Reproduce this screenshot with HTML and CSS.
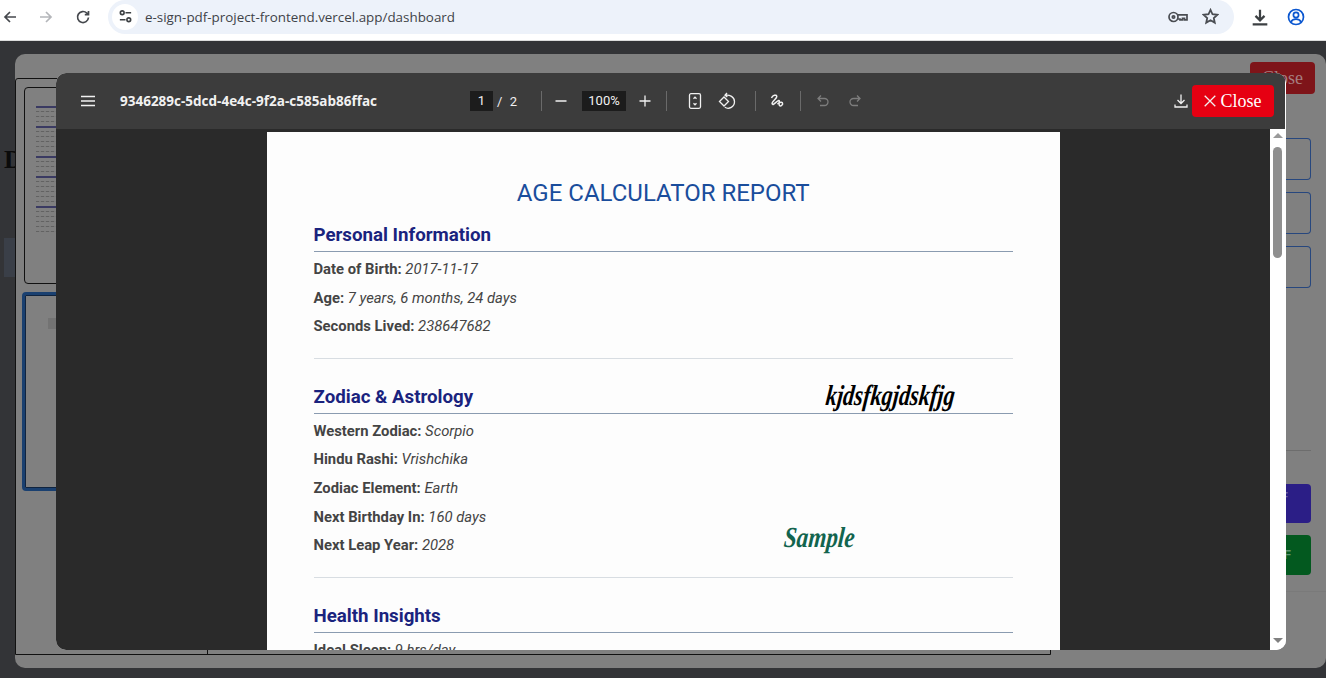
FILE: index.html
```html
<!DOCTYPE html>
<html lang="en">
<head>
  <meta charset="UTF-8">
  <title>Dashboard</title>
  <link rel="stylesheet" href="styles.css">
</head>
<body>

  <header class="browser-bar">
    <svg class="nav-icon" viewBox="0 0 16 16"><path d="M14 8H3M8 3 3 8l5 5"/></svg>
    <svg class="nav-icon nav-off" viewBox="0 0 16 16"><path d="M2 8h11M8 3l5 5-5 5"/></svg>
    <svg class="nav-icon" viewBox="0 0 16 16"><path d="M13.500 8.500A5.500 5.500 0 1 1 11.800 4L13.500 5.700M13.500 2v3.700H9.800"/></svg>
    <div class="url-box">
      <span class="site-chip">
        <svg viewBox="0 0 16 16"><circle cx="4.500" cy="4" r="2"/><path d="M8 4h6M2 11.500h6"/><circle cx="11.500" cy="11.500" r="2"/></svg>
      </span>
      <span class="url-text">e-sign-pdf-project-frontend.vercel.app/dashboard</span>
      <svg class="url-icon url-key" viewBox="0 0 20 12"><circle cx="5.500" cy="6" r="4.500"/><circle cx="5.500" cy="6" r="1.200"/><path d="M10 3.800h9v5h-2.500V7.300h-2v1.500h-2.500V8H10"/></svg>
      <svg class="url-icon" viewBox="0 0 16 16"><path d="m8 1.800 1.900 4.100 4.500.5-3.300 3 .9 4.400L8 11.600l-4 2.200.9-4.400-3.300-3 4.500-.5z"/></svg>
    </div>
    <svg class="bar-download" viewBox="0 0 16 16"><path d="M8 1.500v9M4 7l4 4 4-4M1.500 14.500h13"/></svg>
    <svg class="bar-profile" viewBox="0 0 18 18"><circle cx="9" cy="9" r="7.500"/><circle cx="9" cy="7" r="2.600"/><path d="M3.800 14c1.500-2.200 3.200-2.800 5.200-2.800s3.700.6 5.200 2.800"/></svg>
  </header>

  <main class="page-dim">
    <span class="back-letter">D</span>
    <span class="back-tab"></span>

    <div class="back-modal">
      <div class="back-head">
        <span class="back-close">Close</span>
      </div>
      <div class="back-body">
        <div class="doc-box">
          <aside class="thumb-col">
            <div class="thumb thumb-text">
              <b></b><i></i><i></i><i></i>
              <b></b><i></i><i></i><i></i><i></i><i></i>
              <b></b><i></i><i></i><i></i>
              <b></b><i></i><i></i><i></i><i></i><i></i>
              <b></b><i></i><i></i><i></i><i></i><i></i>
            </div>
            <div class="thumb thumb-active"><span class="mini-sign"></span></div>
          </aside>
        </div>
        <section class="tool-col">
          <div class="tool-box"></div>
          <div class="tool-box"></div>
          <div class="tool-box"></div>
          <div class="tool-rule"></div>
          <div class="tool-btn tool-blue">PDF</div>
          <div class="tool-btn tool-green">PDF</div>
          <div class="tool-foot"></div>
        </section>
      </div>
    </div>

    <div class="pdf-modal">
      <div class="pdf-toolbar">
        <svg class="tb-menu" viewBox="0 0 16 12"><path d="M1 1.500h14M1 6h14M1 10.500h14"/></svg>
        <span class="pdf-name">9346289c-5dcd-4e4c-9f2a-c585ab86ffac</span>
        <div class="tb-center">
          <span class="tb-input tb-page">1</span>
          <span class="tb-count"><span>/</span><span>2</span></span>
          <span class="tb-sep sep-a"></span>
          <svg class="tb-icon" viewBox="0 0 16 16"><path d="M2.500 8h11"/></svg>
          <span class="tb-input tb-zoom">100%</span>
          <svg class="tb-icon" viewBox="0 0 16 16"><path d="M2.500 8h11M8 2.500v11"/></svg>
          <span class="tb-sep sep-b"></span>
          <svg class="tb-icon" viewBox="0 0 16 16"><rect x="2.500" y=".7" width="11" height="14.600" rx="1.500"/><path d="M6.500 5.700 8 4.200l1.500 1.500M6.500 10.300 8 11.800l1.500-1.500"/></svg>
          <svg class="tb-icon tb-rotate" viewBox="0 0 18 18"><path d="M1.500 9.500 6 5l4.500 4.500L6 14zM9 1 7 3.200l2.300 1.900M7.200 3.200c4.500-.6 9.300 1.600 9.300 6.600a6.400 6.400 0 0 1-9.700 5.500"/></svg>
          <span class="tb-sep sep-c"></span>
          <svg class="tb-icon tb-sign" viewBox="0 0 16 16"><path d="M2.500 5C3.500 2.300 7.500 1 7.800 3.500 8 6 2 8.500 3.200 11c1 2 4.300-3 6.500-3.500 1.600-.3-.4 3.500.7 5 1.400 1.300 4-1.200 3-2.700-1-1.200-4.300 0-4.900 1.500"/></svg>
          <span class="tb-sep sep-d"></span>
          <svg class="tb-icon tb-off" viewBox="0 0 16 16"><path d="M6 2.500 3 5.500l3 3M3 5.500h6.500a3.500 3.500 0 0 1 0 7H5"/></svg>
          <svg class="tb-icon tb-off tb-redo" viewBox="0 0 16 16"><path d="m10 2.500 3 3-3 3M13 5.500H6.500a3.500 3.500 0 0 0 0 7H11"/></svg>
        </div>
        <svg class="tb-icon tb-download" viewBox="0 0 16 16"><path d="M8 1.500V10M4.500 7 8 10.500 11.500 7M2 11.500v2.500h12v-2.500"/></svg>
        <button class="close-btn" type="button">
          <svg viewBox="0 0 12 12"><path d="M.7.700l10.600 10.600M11.300.700.7 11.300"/></svg>
          Close
        </button>
      </div>

      <div class="pdf-view">
        <div class="pdf-pages">
          <article class="pdf-page">
            <h1>AGE CALCULATOR REPORT</h1>

            <h2>Personal Information</h2>
            <p><b>Date of Birth:</b> <em>2017-11-17</em></p>
            <p><b>Age:</b> <em>7 years, 6 months, 24 days</em></p>
            <p><b>Seconds Lived:</b> <em>238647682</em></p>
            <hr>

            <h2>Zodiac &amp; Astrology</h2>
            <p><b>Western Zodiac:</b> <em>Scorpio</em></p>
            <p><b>Hindu Rashi:</b> <em>Vrishchika</em></p>
            <p><b>Zodiac Element:</b> <em>Earth</em></p>
            <p><b>Next Birthday In:</b> <em>160 days</em></p>
            <p><b>Next Leap Year:</b> <em>2028</em></p>
            <hr>

            <h2>Health Insights</h2>
            <p><b>Ideal Sleep:</b> <em>9 hrs/day</em></p>

            <span class="sign sign-black">kjdsfkgjdskfjg</span>
            <span class="sign sign-green">Sample</span>
          </article>
        </div>
        <div class="scrollbar">
          <span class="arrow-up"></span>
          <span class="scroll-thumb"></span>
          <span class="arrow-down"></span>
        </div>
      </div>
    </div>
  </main>

</body>
</html>
```

FILE: styles.css
```css
* {
  box-sizing: border-box;
}
html, body {
  height: 100%;
}
body {
  margin: 0;
  overflow: hidden;
  font-family: 'Roboto', 'Liberation Sans', sans-serif;
  background-color: #fff;
}

/* browser bar */
.browser-bar {
  height: 41px;
  display: flex;
  align-items: center;
  padding: 0 0 7px 2px;
  background-color: #fff;
  border-bottom: 1px solid #dcdcdc;
}
.browser-bar svg {
  fill: none;
  stroke-width: 1.700;
}
.nav-icon {
  width: 16px;
  height: 16px;
  margin-right: 20px;
  stroke: #45484d;
}
.nav-off {
  stroke: #b4b6ba;
  margin-right: 21px;
}
.url-box {
  width: 1126px;
  height: 34px;
  margin-left: -3px;
  display: flex;
  align-items: center;
  padding: 0 15px 0 4px;
  background-color: #edf2fa;
  border-radius: 17px;
}
.site-chip {
  width: 26px;
  height: 26px;
  display: flex;
  align-items: center;
  justify-content: center;
  background-color: #fff;
  border-radius: 50%;
}
.site-chip svg {
  width: 15px;
  height: 15px;
  stroke: #3c4043;
}
.url-text {
  flex: 1;
  margin-left: 7px;
  font-size: 13.400px;
  color: #3f4348;
  font-family: 'Open Sans', 'Liberation Sans', sans-serif;
}
.url-icon {
  width: 17px;
  height: 17px;
  stroke: #4a4d52;
}
.url-key {
  width: 20px;
  height: 12px;
  margin-right: 14px;
  margin-left: -1px;
}
.bar-download {
  width: 18px;
  height: 18px;
  margin-left: 17px;
  stroke: #3c4043;
  stroke-width: 2 !important;
}
.bar-profile {
  width: 18px;
  height: 18px;
  margin-left: 18px;
  stroke: #0b57d0;
}

/* dimmed page behind the viewer */
.page-dim {
  position: relative;
  height: 637px;
  padding: 13px 0 10px 15px;
  background-color: #333437;
}
.back-modal {
  position: relative;
  height: 100%;
  display: flex;
  flex-direction: column;
  background-color: #808080;
  border-radius: 10px;
  overflow: hidden;
}
.back-head {
  height: 24px;
  flex-shrink: 0;
  position: relative;
}
.back-close {
  position: absolute;
  right: 11px;
  top: 8px;
  width: 65px;
  text-align: center;
  background-color: #7e1419;
  border-radius: 4px;
  color: #a57e80;
  font: 18px/32px 'Liberation Serif', serif;
}
.back-body {
  display: flex;
}
.doc-box {
  width: 1036px;
  height: 577px;
  flex-shrink: 0;
  border: 1px solid #111;
  border-radius: 3px 0 0 0;
}
.thumb-col {
  width: 192px;
  height: 100%;
  padding: 8px 0 0 8px;
  border-right: 1px solid #111;
}
.thumb {
  width: 140px;
  border: 1px solid #111;
  border-radius: 4px;
}
.thumb-text {
  height: 197px;
  padding: 18px 6px 0 11px;
}
.thumb-text b, .thumb-text i {
  display: block;
  height: 1px;
  margin-bottom: 4px;
}
.thumb-text b {
  width: 30px;
  height: 2px;
  margin-top: 4px;
  margin-bottom: 3px;
  background-color: #3a3a62;
}
.thumb-text b:first-child {
  margin-top: 0;
}
.thumb-text i {
  width: 90px;
  background-image: repeating-linear-gradient(90deg, #626262 0 3px, #7a7a7a 3px 5px);
}
.thumb-active {
  height: 199px;
  margin: 8px 0 0 -2px;
  border: 3px solid #1a4070;
  box-shadow: inset 0 0 0 1px #10243f;
  position: relative;
}
.mini-sign {
  position: absolute;
  left: 23px;
  top: 23px;
  width: 20px;
  height: 11px;
  background-color: #737373;
}
.tool-col {
  flex: 1;
  padding: 60px 15px 0 0;
  display: flex;
  flex-direction: column;
}
.tool-box {
  height: 42px;
  margin-bottom: 12px;
  border: 1px solid #27477e;
  border-left: 0;
  border-radius: 0 4px 4px 0;
}
.tool-rule {
  height: 1px;
  margin-top: 150px;
  background-color: #6d6d6d;
}
.tool-btn {
  height: 39px;
  padding-right: 23px;
  text-align: right;
  font: bold 12px/26px 'Liberation Sans', sans-serif;
  border-radius: 0 4px 4px 0;
}
.tool-blue {
  margin-top: 33px;
  background-color: #2b1e86;
  color: #6b66a8;
}
.tool-green {
  height: 40px;
  margin-top: 12px;
  padding-right: 20px;
  background-color: #03591f;
  color: #5f9470;
  line-height: 40px;
}
.tool-foot {
  height: 1px;
  margin: 16px -15px 0 0;
  background-color: #7a7a7a;
}
.back-letter {
  position: absolute;
  left: 4px;
  top: 104px;
  font: bold 26px 'Liberation Serif', serif;
  color: #0b0b0b;
}
.back-tab {
  position: absolute;
  left: 4px;
  top: 197px;
  width: 11px;
  height: 39px;
  background-color: #3a3f48;
}

/* pdf viewer */
.pdf-modal {
  position: absolute;
  left: 56px;
  top: 32px;
  width: 1230px;
  height: 577px;
  display: flex;
  flex-direction: column;
  border-radius: 10px;
  overflow: hidden;
  background-color: #fff;
}
.pdf-toolbar {
  height: 56px;
  margin-right: 1px;
  flex-shrink: 0;
  display: flex;
  align-items: center;
  padding: 0 11px 0 24px;
  background-color: #3c3c3c;
  color: #f1f1f1;
}
.pdf-toolbar svg {
  fill: none;
  stroke: #f1f1f1;
  stroke-width: 1.300;
}
.tb-menu {
  width: 16px;
  height: 12px;
}
.pdf-name {
  width: 350px;
  margin-left: 24px;
  font-size: 13.500px;
  font-weight: 700;
  font-family: 'Open Sans', 'Roboto', sans-serif;
  white-space: nowrap;
}
.tb-center {
  flex: 1;
  display: flex;
  align-items: center;
}
.tb-input {
  height: 20px;
  line-height: 20px;
  text-align: center;
  font-size: 13px;
  background-color: #1c1c1c;
}
.tb-page {
  width: 23px;
}
.tb-zoom {
  width: 44px;
  margin: 0 11px 0 13px;
}
.tb-count {
  width: 20px;
  margin-left: 4px;
  display: flex;
  justify-content: space-between;
  font-size: 13px;
}
.tb-sep {
  width: 1px;
  height: 20px;
  background-color: #6a6a6a;
}
.sep-a {
  margin: 0 11px 0 24px;
}
.sep-b {
  margin: 0 20px 0 13px;
}
.sep-c {
  margin: 0 13px 0 19px;
}
.sep-d {
  margin: 0 14px 0 15px;
}
.tb-icon {
  width: 16px;
  height: 16px;
  flex-shrink: 0;
}
.tb-rotate {
  width: 18px;
  height: 18px;
  margin-left: 15px;
}
.pdf-toolbar .tb-sign {
  stroke-width: 1.500;
}
.pdf-toolbar .tb-off {
  stroke: #7d7d7d;
}
.tb-redo {
  margin-left: 16px;
}
.close-btn {
  width: 82px;
  height: 32px;
  margin-left: 3px;
  padding: 0;
  display: flex;
  align-items: center;
  justify-content: center;
  gap: 4px;
  background-color: #e60012;
  color: #fff;
  border: none;
  border-radius: 4px;
  font: 18px 'Liberation Serif', serif;
}
.close-btn svg {
  width: 12px;
  height: 12px;
}
.pdf-view {
  flex: 1;
  min-height: 0;
  display: flex;
  position: relative;
}
.pdf-pages {
  flex: 1;
  overflow: hidden;
  padding: 3px 0 0 211px;
  background-color: #2a2a2a;
}
.pdf-page {
  position: relative;
  width: 793px;
  height: 900px;
  padding: 47px 47px 0 46.500px;
  background-color: #fdfdfd;
  color: #444;
}
.pdf-page h1 {
  margin: 0 0 16px;
  text-align: center;
  font-size: 24px;
  line-height: 28px;
  font-weight: 400;
  color: #1a4d9c;
}
.pdf-page h2 {
  margin: 0 0 3px;
  padding-bottom: 4px;
  font-size: 18.700px;
  line-height: 24px;
  font-weight: 700;
  color: #1a237e;
  border-bottom: 1px solid #8a9bb0;
}
.pdf-page p {
  margin: 0;
  height: 28.600px;
  line-height: 28.600px;
  font-size: 14.800px;
}
.pdf-page hr {
  margin: 17px 0 26px;
  border: 0;
  border-top: 1px solid #d8dde2;
}
.sign {
  position: absolute;
  font-family: 'Liberation Serif', serif;
  font-style: italic;
  font-weight: 700;
  white-space: nowrap;
  transform-origin: left center;
}
.sign-black {
  left: 559px;
  top: 247px;
  font-size: 29px;
  color: #000;
  transform: scaleX(.77) skewX(-8deg);
}
.sign-green {
  left: 517px;
  top: 389px;
  font-size: 29px;
  color: #12644e;
  transform: scaleX(.8) skewX(-6deg);
}
.scrollbar {
  width: 16px;
  position: relative;
  background-color: #fff;
  flex-shrink: 0;
}
.scroll-thumb {
  position: absolute;
  left: 3px;
  top: 18px;
  width: 9px;
  height: 111px;
  border-radius: 5px;
  background-color: #8f8f8f;
}
.arrow-up, .arrow-down {
  position: absolute;
  left: 3px;
  width: 0;
  height: 0;
  border-left: 5px solid transparent;
  border-right: 5px solid transparent;
}
.arrow-up {
  top: 4px;
  border-bottom: 5px solid #9a9a9a;
}
.arrow-down {
  bottom: 7px;
  border-top: 5px solid #808080;
}
```
